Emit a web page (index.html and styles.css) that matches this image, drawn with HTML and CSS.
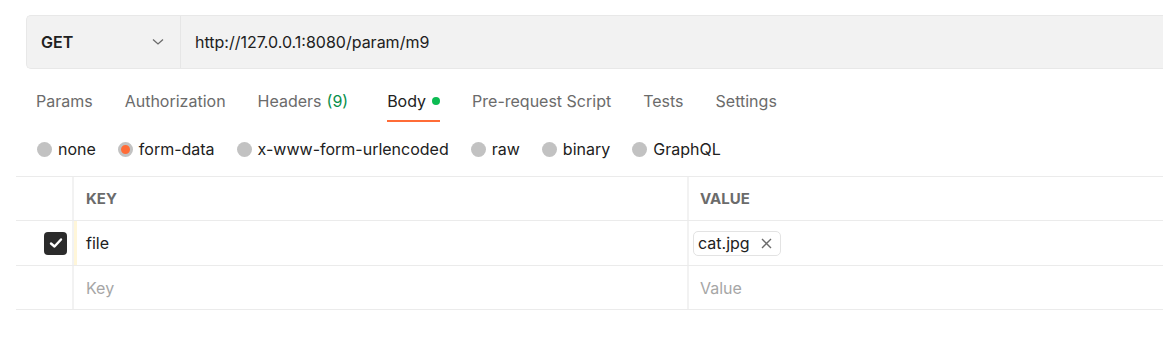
FILE: index.html
```html
<!DOCTYPE html>
<html lang="en">
<head>
    <meta charset="UTF-8">
    <title>Request - form-data</title>
    <link rel="stylesheet" href="styles.css">
</head>
<body>
    <div class="url-bar">
        <div class="method">
            <span>GET</span>
            <svg class="chevron" width="12" height="8" viewBox="0 0 12 8"><path d="M1 1.5 L6 6 L11 1.5" fill="none" stroke="#6b6b6b" stroke-width="1.3"/></svg>
        </div>
        <div class="url">http://127.0.0.1:8080/param/m9</div>
    </div>

    <nav class="tabs">
        <span class="tab">Params</span>
        <span class="tab">Authorization</span>
        <span class="tab headers">Headers <span class="count">(9)</span></span>
        <span class="tab active">Body <span class="dot"></span></span>
        <span class="tab">Pre-request Script</span>
        <span class="tab">Tests</span>
        <span class="tab">Settings</span>
    </nav>

    <div class="body-types">
        <label class="radio"><span class="circle"></span>none</label>
        <label class="radio selected"><span class="circle"></span>form-data</label>
        <label class="radio"><span class="circle"></span>x-www-form-urlencoded</label>
        <label class="radio"><span class="circle"></span>raw</label>
        <label class="radio"><span class="circle"></span>binary</label>
        <label class="radio"><span class="circle"></span>GraphQL</label>
    </div>

    <div class="kv-table">
        <div class="row head">
            <div class="cell check"></div>
            <div class="cell key">KEY</div>
            <div class="cell value">VALUE</div>
        </div>
        <div class="row filled">
            <div class="cell check">
                <span class="checkbox">
                    <svg width="14" height="12" viewBox="0 0 14 12"><path d="M2 6.5 L5.5 9.5 L12 2.5" fill="none" stroke="#fff" stroke-width="2.4" stroke-linecap="round" stroke-linejoin="round"/></svg>
                </span>
            </div>
            <div class="cell key edited">file</div>
            <div class="cell value">
                <span class="file-chip">cat.jpg
                    <svg class="close" width="11" height="11" viewBox="0 0 11 11"><path d="M1 1 L10 10 M10 1 L1 10" stroke="#6b6b6b" stroke-width="1.4"/></svg>
                </span>
            </div>
        </div>
        <div class="row">
            <div class="cell check"></div>
            <div class="cell key placeholder">Key</div>
            <div class="cell value placeholder">Value</div>
        </div>
    </div>
</body>
</html>
```

FILE: styles.css
```css
body {
    margin: 0;
    background: #fff;
    font-family: Inter, "Noto Sans", sans-serif;
    font-size: 16px;
    color: #212121;
}

.url-bar {
    display: flex;
    height: 52px;
    margin: 15px 0 0 26px;
    background: #f2f2f2;
    border: 1px solid #e8e8e8;
    border-right: none;
    border-radius: 5px 0 0 5px;
}

.method {
    width: 154px;
    display: flex;
    align-items: center;
    justify-content: space-between;
    padding: 0 16px 0 14px;
    box-sizing: border-box;
    border-right: 1px solid #e6e6e6;
    font-weight: 600;
}

.url {
    display: flex;
    align-items: center;
    padding-left: 14px;
    color: #212121;
}

.tabs {
    display: flex;
    gap: 32px;
    margin: 0 0 0 36px;
    height: 53px;
    align-items: stretch;
}

.tab {
    display: flex;
    align-items: center;
    color: #6b6b6b;
    padding-top: 12px;
    box-sizing: border-box;
    border-bottom: 2px solid transparent;
}

.tab.headers {
    margin-right: 7px;
}

.tab.active {
    color: #212121;
    border-bottom-color: #ff6c37;
}

.count {
    color: #0a8f4b;
    margin-left: 5px;
}

.dot {
    width: 8px;
    height: 8px;
    border-radius: 50%;
    background: #0cbb52;
    margin-left: 6px;
}

.body-types {
    display: flex;
    gap: 22px;
    margin: 16px 0 0 37px;
    height: 22px;
    align-items: center;
}

.radio {
    display: flex;
    align-items: center;
    gap: 6px;
}

.circle {
    width: 15px;
    height: 15px;
    border-radius: 50%;
    background: #c2c2c2;
    box-sizing: border-box;
}

.radio.selected .circle {
    background: #ff6c37;
    border: 3px solid #c2c2c2;
}

.kv-table {
    margin: 16px 0 0 16px;
    border-top: 1px solid #ebebeb;
}

.row {
    display: flex;
    height: 44px;
    box-sizing: border-box;
    border-bottom: 1px solid #ebebeb;
}

.row.filled {
    height: 45px;
}

.cell {
    display: flex;
    align-items: center;
    box-sizing: border-box;
}

.cell.check {
    width: 58px;
    justify-content: flex-end;
    padding-right: 5px;
    border-right: 2px solid #f2f2f2;
}

.cell.key {
    width: 615px;
    padding-left: 12px;
    border-right: 2px solid #f2f2f2;
}

.cell.value {
    flex: 1;
    padding-left: 11px;
}

.head .cell {
    font-weight: 700;
    color: #6b6b6b;
    font-size: 15px;
}

.cell.key.edited {
    box-shadow: inset 3px 0 0 #fff6d9;
}

.placeholder {
    color: #a6a6a6;
}

.checkbox {
    width: 23px;
    height: 23px;
    border-radius: 4px;
    background: #2b2b2b;
    display: flex;
    align-items: center;
    justify-content: center;
}

.file-chip {
    display: inline-flex;
    align-items: center;
    gap: 11px;
    height: 25px;
    padding: 0 8px 0 4px;
    margin-left: -7px;
    border: 1px solid #e3e3e3;
    border-radius: 5px;
    box-sizing: border-box;
}
```
